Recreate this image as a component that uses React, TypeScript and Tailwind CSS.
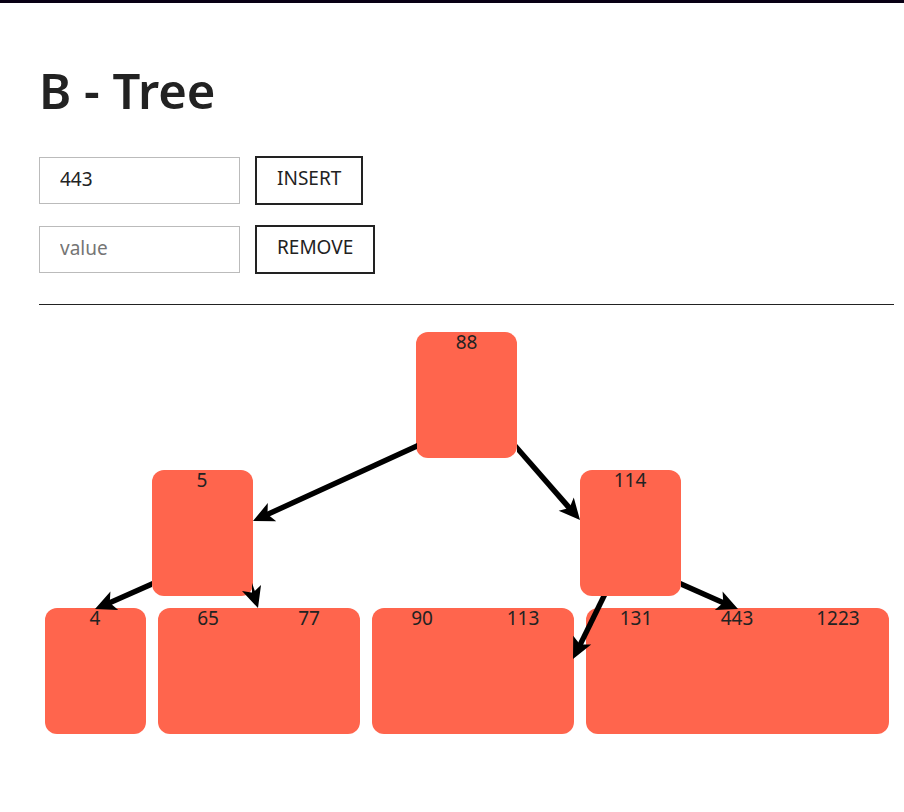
import { useState } from "react";

type Point = [number, number];

interface TreeNode {
  keys: number[];
  children?: TreeNode[];
}

interface Edge {
  shaft: Point[];
  tip: Point;
  angle: number;
}

const tree: TreeNode = {
  keys: [88],
  children: [
    { keys: [5], children: [{ keys: [4] }, { keys: [65, 77] }] },
    { keys: [114], children: [{ keys: [90, 113] }, { keys: [131, 443, 1223] }] },
  ],
};

const edges: Edge[] = [
  { shaft: [[372, 111], [372, 117], [221, 186], [219, 181]], tip: [208, 189], angle: 155 },
  { shaft: [[472, 112], [472, 120], [525, 181], [529, 177]], tip: [535, 188], angle: 49 },
  { shaft: [[107, 249], [107, 255], [64, 274], [62, 269]], tip: [50, 277], angle: 157 },
  { shaft: [[207, 251], [212, 265], [207, 265]], tip: [213, 276], angle: 72 },
  { shaft: [[556, 264], [562, 264], [537, 315], [532, 313]], tip: [528, 327], angle: 116 },
  { shaft: [[636, 249], [636, 255], [679, 274], [681, 269]], tip: [693, 277], angle: 23 },
];

function Node({ keys }: { keys: number[] }) {
  return (
    <div className="flex h-[126px] rounded-xl bg-[#ff654d]">
      {keys.map((key) => (
        <span key={key} className="w-[101px] text-center leading-5">
          {key}
        </span>
      ))}
    </div>
  );
}

function Subtree({ node }: { node: TreeNode }) {
  return (
    <div className="flex flex-col items-center gap-3">
      <Node keys={node.keys} />
      {node.children && (
        <div className="flex gap-3">
          {node.children.map((child) => (
            <Subtree key={child.keys[0]} node={child} />
          ))}
        </div>
      )}
    </div>
  );
}

function Edges() {
  return (
    <svg
      className="pointer-events-none absolute inset-0 h-full w-full overflow-visible"
      viewBox="0 0 844 402"
      aria-hidden="true"
    >
      {edges.map(({ shaft, tip, angle }) => (
        <g key={tip.join()}>
          <polygon points={shaft.map((p) => p.join()).join(" ")} />
          <path
            d="M-21 -10 L0 0 L-21 10 L-16 0 Z"
            transform={`translate(${tip[0]} ${tip[1]}) rotate(${angle})`}
          />
        </g>
      ))}
    </svg>
  );
}

function ValueForm({ label, initial }: { label: string; initial: string }) {
  const [value, setValue] = useState(initial);
  return (
    <form className="flex items-center gap-[15px]" onSubmit={(e) => e.preventDefault()}>
      <input
        type="text"
        aria-label={`${label} value`}
        placeholder="value"
        value={value}
        onChange={(e) => setValue(e.target.value)}
        className="h-[47px] w-[201px] border border-[#bbbbbb] px-5 pb-1 outline-none placeholder:text-[#757575]"
      />
      <button type="submit" className="h-[49px] border-2 border-[#222222] px-5 pb-1 uppercase">
        {label}
      </button>
    </form>
  );
}

export default function App() {
  return (
    <div className="min-h-screen border-t-3 border-[#080014] bg-white pr-[10px] pl-[39px] font-['Noto_Sans',sans-serif] text-[19px] text-[#222222]">
      <h1 className="pt-[57px] text-[49px] leading-[60px] font-semibold">B - Tree</h1>
      <div className="mt-9 flex flex-col gap-5">
        <ValueForm label="Insert" initial="443" />
        <ValueForm label="Remove" initial="" />
      </div>
      <hr className="mt-[30px] border-t border-[#222222]" />
      <main className="mt-[27px] flex justify-center">
        <div className="relative shrink-0">
          <Subtree node={tree} />
          <Edges />
        </div>
      </main>
    </div>
  );
}
